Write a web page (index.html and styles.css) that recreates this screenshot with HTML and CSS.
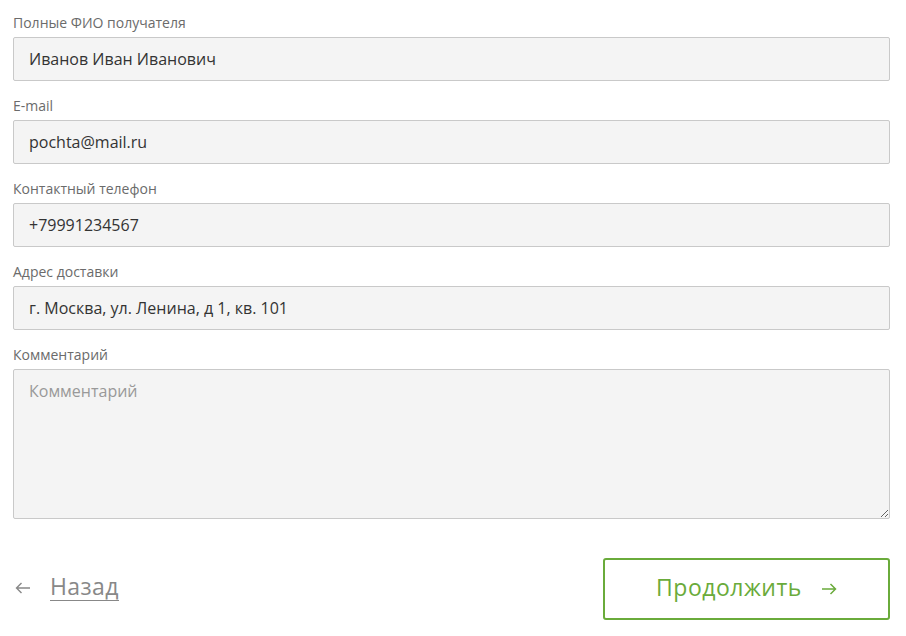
FILE: index.html
```html
<!DOCTYPE html>
<html lang="ru">
<head>
<meta charset="utf-8">
<link rel="stylesheet" href="styles.css">
</head>
<body>
<form class="form">
  <div class="field">
    <label class="label">Полные ФИО получателя</label>
    <input class="input" type="text" value="Иванов Иван Иванович">
  </div>
  <div class="field">
    <label class="label">E-mail</label>
    <input class="input" type="text" value="pochta@mail.ru">
  </div>
  <div class="field">
    <label class="label">Контактный телефон</label>
    <input class="input" type="text" value="+79991234567">
  </div>
  <div class="field">
    <label class="label">Адрес доставки</label>
    <input class="input" type="text" value="г. Москва, ул. Ленина, д 1, кв. 101">
  </div>
  <div class="field">
    <label class="label">Комментарий</label>
    <textarea class="input textarea" placeholder="Комментарий"></textarea>
  </div>
  <div class="actions">
    <a class="back" href="#">
      <svg class="back-arrow" width="16" height="12" viewBox="0 0 16 12"><path d="M15 6H1.5M6.5 1L1.5 6l5 5" fill="none" stroke="#888" stroke-width="1.4"/></svg>
      <span class="back-text">Назад</span>
    </a>
    <button class="next" type="button">Продолжить<svg class="next-arrow" width="16" height="12" viewBox="0 0 16 12"><path d="M1 6h13.5M9.5 1l5 5-5 5" fill="none" stroke="#6aab3b" stroke-width="1.5"/></svg></button>
  </div>
</form>
</body>
</html>
```
FILE: styles.css
```css
* { box-sizing: border-box; }
html, body { margin: 0; background: #fff; }
body { font-family: "Open Sans", "Noto Sans", sans-serif; color: #333; }
.form { padding: 13px 16px 0 13px; display: flex; flex-direction: column; }
.field { display: flex; flex-direction: column; margin-bottom: 15px; }
.label { font-size: 14px; line-height: 20px; color: #6b6b6b; margin-bottom: 4px; }
.input {
  height: 44px;
  width: 100%;
  background: #f4f4f4;
  border: 1px solid #c9c9c9;
  border-radius: 2px;
  padding: 0 15px;
  font-family: inherit;
  font-size: 16px;
  color: #333;
  outline: none;
}
.textarea { height: 150px; padding: 10px 15px; resize: vertical; line-height: 22px; }
.textarea::placeholder { color: #999; }
.actions { display: flex; justify-content: space-between; align-items: center; margin-top: 24px; }
.back { display: flex; align-items: center; text-decoration: none; color: #888; font-size: 23px; letter-spacing: 0.4px; margin-left: 2px; margin-bottom: 5px; }
.back-arrow { margin-right: 19px; margin-top: 3px; }
.back-text { border-bottom: 1px solid #888; line-height: 28px; }
.next {
  width: 287px;
  height: 62px;
  border: 2px solid #6aab3b;
  border-radius: 3px;
  background: #fff;
  color: #6aab3b;
  font-family: inherit;
  font-size: 23px;
  letter-spacing: 0.5px;
  display: flex;
  align-items: center;
  justify-content: center;
  padding: 0 0 4px 0;
  cursor: pointer;
}
.next-arrow { margin-left: 19px; margin-top: 4px; }
```
